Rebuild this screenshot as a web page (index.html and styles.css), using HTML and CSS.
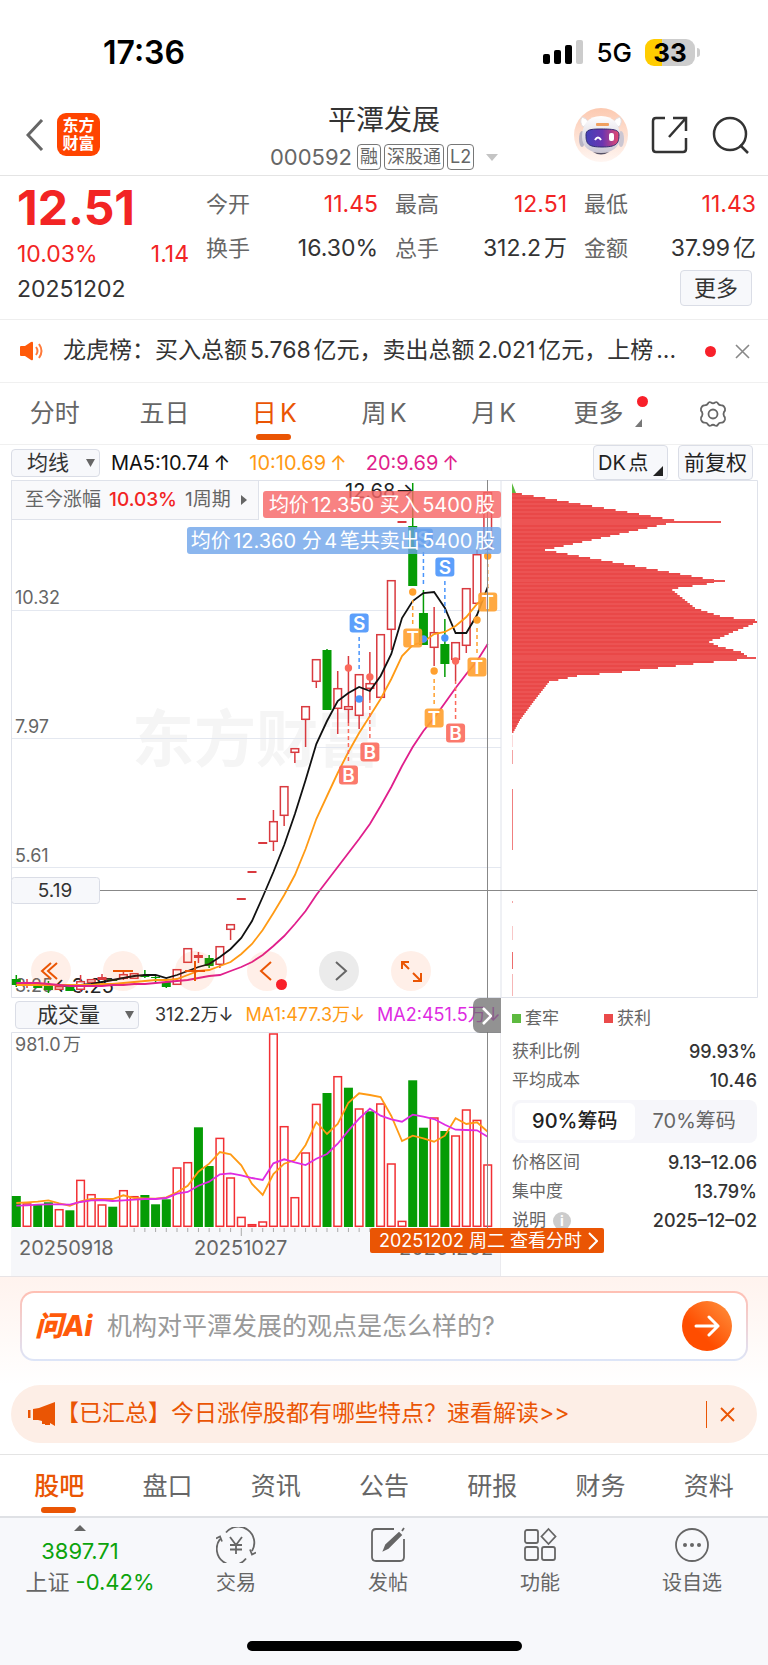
FILE: index.html
```html
<!DOCTYPE html>
<html lang="zh-CN">
<head>
<meta charset="utf-8">
<meta name="viewport" content="width=device-width, initial-scale=1">
<title>平潭发展 000592</title>
<link rel="stylesheet" href="styles.css">
</head>
<body>
<div class="status">
  <span class="clock">17:36</span>
  <span class="status-right">
    <svg class="signal" viewBox="0 0 40 26" aria-hidden="true"><rect x="0" y="15" width="7" height="10" rx="2"/><rect x="11" y="11" width="7" height="14" rx="2"/><rect x="22" y="6" width="7" height="19" rx="2"/><rect x="33" y="1" width="7" height="24" rx="2" fill="#ccc"/></svg>
    <span class="network">5G</span>
    <span class="battery">33</span>
  </span>
</div>

<header class="head">
  <div class="head-left">
    <button class="plain" aria-label="返回"><svg width="18" height="32" viewBox="0 0 18 32"><path d="M16 1 2 16l14 15" fill="none" stroke="#666" stroke-width="3"/></svg></button>
    <span class="brand">东方<br>财富</span>
  </div>
  <div class="head-mid">
    <h1>平潭发展</h1>
    <div class="code">000592 <span class="chip">融</span><span class="chip">深股通</span><span class="chip">L2</span><svg class="caret" width="12" height="7" viewBox="0 0 12 7"><path d="M0 0h12L6 7z" fill="#c4c4c4"/></svg></div>
  </div>
  <div class="head-right">
    <button class="plain" aria-label="智能助手"><svg width="54" height="56" viewBox="0 0 54 56">
      <defs>
        <linearGradient id="halo" x1="0" y1="0" x2="0" y2="1"><stop offset="0" stop-color="#fcc9b0"/><stop offset="1" stop-color="#fff6f2"/></linearGradient>
        <linearGradient id="visor" x1="0" y1="0" x2="1" y2="0"><stop offset="0" stop-color="#4340b8"/><stop offset=".5" stop-color="#6b35b0"/><stop offset="1" stop-color="#e8496e"/></linearGradient>
        <linearGradient id="shell" x1="0" y1="0" x2="0" y2="1"><stop offset="0" stop-color="#fff"/><stop offset="1" stop-color="#c9c5d3"/></linearGradient>
      </defs>
      <circle cx="27" cy="28" r="27" fill="url(#halo)"/>
      <path d="M9 20q-4-5-1-10 5 1 7 6zM45 20q4-5 1-10-5 1-7 6z" fill="#fff" stroke="#e3dbdc"/>
      <ellipse cx="8" cy="32" rx="3" ry="8" fill="#b9b5c4"/><ellipse cx="47" cy="32" rx="3" ry="8" fill="#cbc6d2"/>
      <path d="M27 9c13 0 19 9 19 21 0 10-8 16-19 16S8 40 8 30C8 18 14 9 27 9z" fill="url(#shell)"/>
      <path d="M27 22c14 0 18 1 18 6 0 9-3 12-17 12s-16-3-16-12c0-5 3-6 15-6z" fill="url(#visor)" stroke="#312b72"/>
      <path d="M21 33q3-5 6 0" fill="none" stroke="#fff" stroke-width="2"/>
      <rect x="35" y="26" width="5" height="8" rx="2" fill="#fff"/>
      <rect x="22" y="16" width="13" height="3" rx="1" fill="#f0a060"/>
      <path d="M19 45q8 5 16 0-8 2-16 0z" fill="#555064"/>
    </svg></button>
    <button class="plain" aria-label="分享"><svg width="38" height="38" viewBox="0 0 38 38" fill="none" stroke="#333" stroke-width="2.5"><path d="M14 2H5Q2 2 2 5v28q0 3 3 3h27q3 0 3-3V22M22 2h13v13M35 2 18 21"/></svg></button>
    <button class="plain" aria-label="搜索"><svg width="38" height="38" viewBox="0 0 38 38" fill="none" stroke="#333" stroke-width="2.5"><circle cx="18" cy="18" r="16"/><path d="m28 29 8 8"/></svg></button>
  </div>
</header>

<section class="quote">
  <div class="quote-top">
    <div class="price">
      <strong>12.51</strong>
      <div class="change"><span>10.03%</span><span>1.14</span></div>
    </div>
    <dl class="stats">
      <div><dt>今开</dt><dd class="up">11.45</dd></div>
      <div><dt>最高</dt><dd class="up">12.51</dd></div>
      <div><dt>最低</dt><dd class="up">11.43</dd></div>
      <div><dt>换手</dt><dd>16.30%</dd></div>
      <div><dt>总手</dt><dd>312.2万</dd></div>
      <div><dt>金额</dt><dd>37.99亿</dd></div>
    </dl>
  </div>
  <div class="quote-foot"><time>20251202</time><button class="more">更多</button></div>
</section>

<section class="notice">
  <svg width="24" height="20" viewBox="0 0 24 20"><path d="M1 5h4l6-4q2-1 2 1v16q0 2-2 1l-6-4H1q-1 0-1-1V6q0-1 1-1z" fill="#ff5a0a"/><path d="M16 6q3 4 0 8M19 3q5 7 0 14" fill="none" stroke="#ff7a3a" stroke-width="2"/></svg>
  <p>龙虎榜：买入总额5.768亿元，卖出总额2.021亿元，上榜...</p>
  <i class="dot"></i>
  <button class="plain" aria-label="关闭"><svg width="15" height="15" viewBox="0 0 15 15"><path d="m1 1 13 13M14 1 1 14" stroke="#888" stroke-width="1.6"/></svg></button>
</section>

<nav class="periods">
  <button>分时</button><button>五日</button><button class="on">日K</button><button>周K</button><button>月K</button>
  <button class="has-more">更多<i class="dot"></i><svg width="7" height="8" viewBox="0 0 7 8"><path d="M7 0v8H0z" fill="#777"/></svg></button>
  <button aria-label="设置"><svg width="30" height="28" viewBox="0 0 30 28" fill="none" stroke="#666" stroke-width="1.8" stroke-linejoin="round"><path d="M10 3.500Q11 1.500 13 2.500 15 4 17 2.500 19 1.500 20 3.500 21 5.500 24 5.300 26 5.500 27 8.500 27.500 10.500 26 12 25 14 26 16 27.500 17.500 27 19.500 26 22.500 24 22.700 21 22.500 20 24.500 19 26.500 17 25.500 15 24 13 25.500 11 26.500 10 24.500 9 22.500 6 22.700 4 22.500 3 19.500 2.500 17.500 4 16 5 14 4 12 2.500 10.500 3 8.500 4 5.500 6 5.300 9 5.500 10 3.500z"/><circle cx="15" cy="14" r="4.500"/></svg></button>
</nav>

<div class="ma-bar">
  <span class="picker"><select aria-label="均线"><option>均线</option></select><svg width="9" height="8" viewBox="0 0 9 8"><path d="M0 0h9L4.500 8z" fill="#666"/></svg></span>
  <span class="ma5">MA5:10.74<b>↑</b></span><span class="ma10">10:10.69<b>↑</b></span><span class="ma20">20:9.69<b>↑</b></span>
  <button class="box dk">DK点<svg width="10" height="10" viewBox="0 0 10 10"><path d="M10 0v10H0z" fill="#222"/></svg></button>
  <button class="box">前复权</button>
</div>

<section class="kline">
  <svg viewBox="0 480 768 518" role="img" aria-label="日K线与筹码分布">
    <text class="mark" x="132" y="762">东方财富</text>
    <g class="grid"><path d="M11 610.500H501M11 738.500H501M315 747.500H501M11 867.500H501"/></g>
    <path class="frame" d="M11.500 480.500V997.500H757.500V480.500zM501 480.500V997.500"/>
    <g class="axis"><text x="15" y="604">10.32</text><text x="15" y="733">7.97</text><text x="15" y="862">5.61</text><text x="15" y="992">3.25</text></g>
    <text class="tag-dark" x="53" y="993">←3.25</text>
    <g id="chips"></g>
    <g id="candles"></g>
    <g id="averages"></g>
    <text class="tag-dark" x="345" y="498">12.68→</text>
    <g id="markers"></g>
    <path class="cross" d="M100 890.500H757M487.500 480V998"/>
    <rect x="11.500" y="877.500" width="88" height="26" rx="3" fill="#f7f8fb" stroke="#dadde6"/>
    <text class="cross-label" x="55" y="897">5.19</text>
    <rect x="263" y="491" width="238" height="27" rx="3" fill="#f76767" opacity=".82"/>
    <rect x="187" y="527" width="314" height="27" rx="3" fill="#6ea4ea" opacity=".8"/>
    <text class="deal" x="495" y="512">均价12.350 买入5400股</text>
    <text class="deal" x="495" y="548">均价12.360 分4笔共卖出5400股</text>
  </svg>
  <button class="since">至今涨幅<b>10.03%</b>1周期<svg width="6" height="10" viewBox="0 0 6 10"><path d="M0 0l6 5-6 5z" fill="#666"/></svg></button>
  <div class="tools">
    <button aria-label="最早"><svg viewBox="0 0 40 40"><path d="m20 12-9 8 9 8M26 12l-9 8 9 8"/></svg></button>
    <button aria-label="缩小"><svg viewBox="0 0 40 40"><path d="M10 20h20"/></svg></button>
    <button aria-label="放大"><svg viewBox="0 0 40 40"><path d="M10 20h20M20 10v20"/></svg></button>
    <button aria-label="前一日"><svg viewBox="0 0 40 40"><path d="m24 11-10 9 10 9"/></svg><i class="dot"></i></button>
    <button class="gray" aria-label="后一日"><svg viewBox="0 0 40 40"><path d="m17 11 10 9-10 9"/></svg></button>
    <button aria-label="全屏"><svg viewBox="0 0 40 40"><path d="M11 18v-7h7M11 11l7 7M30 22v8h-8M30 30l-8-8"/></svg></button>
  </div>
</section>

<section class="lower">
  <div class="volume">
    <div class="vol-bar">
      <span class="picker wide"><select aria-label="成交量"><option>成交量</option></select><svg width="9" height="8" viewBox="0 0 9 8"><path d="M0 0h9L4.500 8z" fill="#666"/></svg></span>
      <span>312.2万↓</span><span class="v1">MA1:477.3万↓</span><span class="v2">MA2:451.5万↓</span>
      <button class="handle" aria-label="收起"><svg width="10" height="18" viewBox="0 0 10 18"><path d="m1 1 8 8-8 8" fill="none" stroke="#fff" stroke-width="2.500"/></svg></button>
    </div>
    <svg viewBox="0 1032 501 244" role="img" aria-label="成交量">
      <path class="frame" d="M11.500 1228V1032.500H501"/>
      <rect x="11" y="1228" width="490" height="49" fill="#f6f7fa"/>
      <path d="M500.500 1032v245" stroke="#ebebef"/>
      <text class="axis-text" x="15" y="1051">981.0万</text>
      <g id="volumes"></g>
      <g id="vol-averages"></g>
      <path class="cross" d="M487.500 1032V1228"/>
      <g class="date-text"><text x="19" y="1255">20250918</text><text x="194" y="1255">20251027</text><text x="399" y="1255">20251202</text></g>
    </svg>
    <button class="day-link">20251202 周二 查看分时<svg width="10" height="18" viewBox="0 0 10 18"><path d="m1 1 8 8-8 8" fill="none" stroke="#fff" stroke-width="2"/></svg></button>
  </div>
  <aside class="cost">
    <div class="legend"><span><i class="g"></i>套牢</span><span><i class="r"></i>获利</span></div>
    <dl><div><dt>获利比例</dt><dd>99.93%</dd></div><div><dt>平均成本</dt><dd>10.46</dd></div></dl>
    <div class="toggle"><button class="on">90%筹码</button><button>70%筹码</button></div>
    <dl><div><dt>价格区间</dt><dd>9.13–12.06</dd></div><div><dt>集中度</dt><dd>13.79%</dd></div><div><dt>说明<i class="info">i</i></dt><dd>2025–12–02</dd></div></dl>
  </aside>
</section>

<section class="ask-wrap">
  <form class="ask">
    <label class="ask-logo" for="ask">问Ai</label>
    <input id="ask" type="text" placeholder="机构对平潭发展的观点是怎么样的?">
    <button type="button" aria-label="提问"><svg width="26" height="22" viewBox="0 0 26 22" fill="none" stroke="#fff" stroke-width="3" stroke-linecap="round" stroke-linejoin="round"><path d="M2 11h22M15 2l9 9-9 9"/></svg></button>
  </form>
</section>

<div class="promo">
  <svg width="28" height="24" viewBox="0 0 28 24" fill="#ea5504"><path d="M0 8h2.500v8H0zM5 7l6-1L27 0v24l-5-3v2h-5v-1h-3v-3l-4-1H5z"/></svg>
  <a href="#">【已汇总】今日涨停股都有哪些特点？速看解读&gt;&gt;</a>
  <button class="plain" aria-label="关闭"><svg width="15" height="15" viewBox="0 0 15 15"><path d="m1 1 13 13M14 1 1 14" stroke="#ea5504" stroke-width="1.800"/></svg></button>
</div>

<nav class="sections">
  <a class="on" href="#">股吧</a><a href="#">盘口</a><a href="#">资讯</a><a href="#">公告</a><a href="#">研报</a><a href="#">财务</a><a href="#">资料</a>
</nav>

<footer class="dock">
  <div class="dock-row">
    <a class="index" href="#"><svg width="12" height="6" viewBox="0 0 12 6"><path d="M6 0l6 6H0z" fill="#666"/></svg><span class="down">3897.71</span><span>上证 <em class="down">-0.42%</em></span></a>
    <a href="#"><svg viewBox="0 0 40 36"><path d="M10 5.500A16 16 0 0 1 36 24M30 31.500A16 16 0 0 1 4 12M0 11.500l4-2 2 5M40 25.500l-4 2-2-5M14 10l6 8 6-8M20 18v9M14 18h12M14 22.500h12"/></svg>交易</a>
    <a href="#"><svg viewBox="0 0 40 36"><path d="M26 2H8Q4 2 4 6v24q0 4 4 4h24q4 0 4-4V12"/><path d="M34 4l2-3M16 23l2-5L31 6l2 2L20 21z" fill="#666"/></svg>发帖</a>
    <a href="#"><svg viewBox="0 0 40 36"><rect x="5" y="3" width="13" height="13" rx="2"/><rect x="5" y="20" width="13" height="13" rx="2"/><rect x="22" y="20" width="13" height="13" rx="2"/><path d="M28.500 2l7 7.500-7 7.500-7-7.500z"/></svg>功能</a>
    <a href="#"><svg viewBox="0 0 40 36"><circle cx="20" cy="18" r="16"/><g fill="#666" stroke="none"><circle cx="13" cy="18" r="2"/><circle cx="20" cy="18" r="2"/><circle cx="27" cy="18" r="2"/></g></svg>设自选</a>
  </div>
  <i class="home"></i>
</footer>
<script src="chart.js"></script>
</body>
</html>
```
FILE: styles.css
```css
* { box-sizing: border-box; margin: 0; padding: 0; }
body { background: #fff; color: #333; font-family: Inter, "Noto Sans CJK SC", sans-serif; font-size: 22px; line-height: 1.3; text-autospace: normal; }
button, select, input { font: inherit; color: inherit; border: 0; background: none; border-radius: 0; text-autospace: inherit; }
button { cursor: pointer; }
a { color: inherit; text-decoration: none; }
svg { display: block; }
i, em { font-style: normal; }
.plain { display: flex; }
.dot { width: 11px; height: 11px; border-radius: 50%; background: #f8202a; flex: none; }
.up { color: #f22424; }
.down { color: #0ca30c; }

.status { height: 88px; padding: 17px 73px 0 103px; display: flex; justify-content: space-between; align-items: center; color: #000; }
.clock { font-size: 32px; font-weight: 600; }
.status-right { display: flex; align-items: center; gap: 13px; }
.signal { width: 40px; height: 26px; }
.network { font-size: 26px; font-weight: 500; }
.battery { position: relative; width: 50px; height: 27px; border-radius: 9px; background: linear-gradient(90deg, #ffcc00 34%, #cdcdcd 34%); font-size: 26px; font-weight: 700; line-height: 27px; text-align: center; }
.battery::after { content: ""; position: absolute; left: 52px; top: 9px; width: 3px; height: 9px; border-radius: 0 3px 3px 0; background: #cdcdcd; }

.head { height: 88px; padding: 6px 18px 0 26px; display: grid; grid-template-columns: 1fr auto 1fr; align-items: center; border-bottom: 1px solid #e4e4e4; }
.head-left { display: flex; align-items: center; gap: 13px; }
.brand { width: 43px; height: 43px; border-radius: 9px; background: #ff4400; color: #fff; font-size: 16px; font-weight: 700; line-height: 18px; text-align: center; padding-top: 3px; }
.head-mid { text-align: center; padding: 7px 8px 0 0; }
h1 { font-size: 28px; font-weight: 400; line-height: 38px; }
.code { display: flex; align-items: center; gap: 3px; color: #666; font-size: 22px; line-height: 36px; }
.chip { border: 1px solid #777; border-radius: 4px; height: 26px; line-height: 24px; padding: 0 2px; font-size: 18px; }
.chip:first-of-type { margin-left: 2px; }
.caret { margin-left: 9px; }
.head-right { display: flex; justify-content: flex-end; align-items: center; gap: 23px; }

.quote { padding: 7px 12px 13px 17px; border-bottom: 1px solid #eee; }
.quote-top { display: flex; gap: 17px; }
.price { width: 172px; color: #f22424; }
.price strong { display: block; font-size: 48px; font-weight: 700; line-height: 50px; }
.change { display: flex; justify-content: space-between; line-height: 32px; padding-top: 5px; font-size: 23px; }
.stats { flex: 1; display: grid; grid-template-columns: repeat(3, 1fr); column-gap: 17px; }
.stats div { display: flex; justify-content: space-between; line-height: 43px; }
.stats dt { color: #666; }
.stats dd { font-size: 23px; }
.quote-foot { display: flex; justify-content: space-between; align-items: center; padding-right: 4px; }
.quote-foot time { font-size: 23px; padding-top: 4px; }
.more { width: 72px; height: 36px; border: 1px solid #dadde6; border-radius: 4px; background: #f7f8fb; }

.notice { height: 63px; padding: 0 18px 0 20px; display: flex; align-items: center; border-bottom: 1px solid #f0f0f0; }
.notice p { flex: 1; margin-left: 19px; white-space: nowrap; overflow: hidden; text-overflow: ellipsis; font-size: 23px; }
.notice .dot { margin-right: 19px; }

.periods { height: 62px; display: grid; grid-template-columns: repeat(7, 1fr); border-bottom: 1px solid #f0f0f0; font-size: 25px; color: #666; }
.periods button { position: relative; display: flex; justify-content: center; align-items: center; }
.on { position: relative; }
.periods .on, .sections .on { color: #ea5504; }
.periods .on::after, .sections .on::after { content: ""; position: absolute; left: 50%; bottom: 4px; width: 35px; height: 6px; margin-left: -18px; border-radius: 3px; background: #ea5504; }
.has-more { padding-right: 10px; }
.has-more .dot { position: absolute; right: 10px; top: 13px; }
.has-more svg { position: absolute; right: 16px; bottom: 17px; }

.ma-bar { height: 35px; padding: 0 15px 0 11px; display: flex; align-items: center; font-size: 20px; color: #111; }
.ma-bar b { font-weight: 400; margin-left: 4px; }
.picker { position: relative; flex: none; width: 89px; height: 28px; margin-right: 11px; }
.picker.wide { width: 124px; margin-right: 4px; }
.picker select { appearance: none; width: 100%; height: 100%; padding-left: 15px; border: 1px solid #dadde6; border-radius: 4px; background: #f7f8fb; font-size: 21px; line-height: 26px; color: #333; }
.picker.wide select { padding-left: 21px; }
.picker svg { position: absolute; right: 5px; top: 10px; }
.ma10 { color: #ff9a14; margin-left: 19px; }
.ma20 { color: #e01f8c; margin-left: 19px; }
.box { position: relative; width: 75px; height: 35px; border: 1px solid #dadde6; border-radius: 4px; background: #f7f8fb; font-size: 21px; color: #222; white-space: nowrap; }
.dk { margin: 0 10px 0 auto; text-align: left; padding-left: 4px; font-size: 20px; }
.dk svg { position: absolute; right: 4px; bottom: 3px; }

.kline { position: relative; }
.kline > svg, .volume > svg { width: 100%; height: auto; }
.frame { fill: none; stroke: #dfe2ea; }
.grid path { stroke: #e4e8f0; fill: none; stroke-width: 1; }
.mark { font-size: 62px; font-weight: 700; fill: #f5f5f5; }
.axis text, .axis-text { font-size: 18px; fill: #666; }
.tag-dark { font-size: 20px; fill: #222; }
.cross { fill: none; stroke: #888; }
.cross-label { font-size: 19px; fill: #333; text-anchor: middle; }
.deal { font-size: 20px; fill: #fff; text-anchor: end; }
.badge { font-size: 19px; font-weight: 600; fill: #fff; text-anchor: middle; }
.since { position: absolute; left: 11px; top: 0; height: 40px; padding: 0 11px 0 13px; border: 1px solid #dfe2ea; background: #f9f9fb; display: flex; align-items: center; font-size: 19px; color: #666; text-autospace: no-autospace; }
.since b { color: #f22424; font-weight: 500; margin: 0 8px; }
.since svg { margin-left: 10px; }
.tools { position: absolute; left: 31px; bottom: 7px; display: flex; gap: 32px; }
.tools button { position: relative; width: 40px; height: 40px; border-radius: 50%; background: rgba(255, 100, 30, .1); }
.tools path { fill: none; stroke: #ea5504; stroke-width: 2; }
.tools .gray { background: #ebebeb; }
.tools .gray path { stroke: #666; }
.tools .dot { position: absolute; right: 0; bottom: 1px; }

.lower { display: grid; grid-template-columns: 501fr 267fr; border-bottom: 1px solid #e8e4e6; }
.volume { position: relative; min-width: 0; }
.vol-bar { position: relative; height: 34px; padding-left: 15px; display: flex; align-items: center; gap: 12px; font-size: 18px; white-space: nowrap; text-autospace: no-autospace; }
.v1 { color: #ff9a14; }
.v2 { color: #de2be2; }
.handle { position: absolute; right: 0; top: 0; width: 28px; height: 35px; border-radius: 7px 0 0 7px; background: rgba(110, 110, 110, .75); display: flex; align-items: center; justify-content: center; }
.date-text text { font-size: 20px; fill: #666; }
.day-link { position: absolute; right: -103px; bottom: 23px; height: 25px; padding: 0 6px 0 9px; border-radius: 2px; background: #ea5504; color: #fff; display: flex; align-items: center; gap: 6px; font-size: 18px; white-space: nowrap; }
.cost { padding: 3px 11px 0; font-size: 17px; color: #666; }
.legend { display: flex; gap: 45px; line-height: 34px; margin-bottom: 2px; }
.legend span { display: flex; align-items: center; gap: 4px; }
.legend i { width: 9px; height: 9px; }
.g { background: #5dba3f; }
.r { background: #ea4a4a; }
.cost dl div { display: flex; justify-content: space-between; line-height: 29px; }
.cost dd { font-size: 18px; font-weight: 500; color: #333; }
.toggle { margin: 5px 0; padding: 3px; display: grid; grid-template-columns: 1fr 1fr; border-radius: 8px; background: #f6f6fa; font-size: 20px; line-height: 37px; text-autospace: no-autospace; }
.toggle .on { background: #fff; border-radius: 6px; color: #222; font-weight: 500; }
.info { display: inline-block; width: 18px; height: 18px; margin-left: 7px; border-radius: 50%; background: #ccc; color: #fff; font-weight: 700; font-size: 14px; line-height: 18px; text-align: center; }

.ask-wrap { padding: 14px 20px 24px; background: linear-gradient(#fff3ee, #fff); }
.ask { height: 70px; padding: 0 14px 0 13px; border: 2px solid transparent; border-radius: 14px; background: linear-gradient(#fff, #fff) padding-box, linear-gradient(#ffbfb3, #dde5f8) border-box; display: flex; align-items: center; }
.ask-logo { width: 58px; font-size: 28px; font-weight: 800; font-style: italic; color: #ff5a0a; white-space: nowrap; text-autospace: no-autospace; }
.ask input { flex: 1; min-width: 0; padding-left: 14px; font-size: 25px; outline: 0; text-autospace: no-autospace; }
.ask input::placeholder { color: #999; }
.ask button { width: 50px; height: 50px; border-radius: 50%; background: linear-gradient(45deg, #ff4d00 35%, #ff9440); display: flex; align-items: center; justify-content: center; }

.promo { height: 58px; margin: 0 11px 11px; padding: 0 22px 0 17px; border-radius: 29px; background: #fdeee6; color: #ea5504; display: flex; align-items: center; font-size: 23px; }
.promo a { flex: 1; white-space: nowrap; }
.promo .plain { height: 27px; align-items: center; padding-left: 13px; border-left: 1px solid #ea5504; }

.sections { height: 64px; padding: 0 5px; display: grid; grid-template-columns: repeat(7, 1fr); border-top: 1px solid #e4e4e4; border-bottom: 2px solid #dfe1e5; font-size: 25px; color: #666; text-align: center; line-height: 62px; }
.sections .on { font-weight: 500; }

.dock { background: #f7f8fb; color: #666; padding-bottom: 15px; }
.dock-row { display: grid; grid-template-columns: 160px repeat(4, 1fr); height: 123px; }
.dock a { display: flex; flex-direction: column; align-items: center; padding-top: 9px; font-size: 20px; line-height: 28px; }
.dock a:not(.index) > svg { width: 40px; height: 36px; margin-bottom: 6px; fill: none; stroke: #666; stroke-width: 1.8; }
.dock .index { font-size: 22px; line-height: 31px; padding: 7px 0 0 20px; }
.index svg { margin: 0 20px 5px 0; }
.index span:nth-of-type(1) { margin-right: 20px; }
.home { display: block; width: 275px; height: 10px; margin: 0 auto; border-radius: 5px; background: #000; }
```
FILE: chart.js
```js
const STEP = 10.714, X0 = 16.3, RED = '#d93a3f', GREEN = '#059c05';
const x = i => X0 + STEP * i;
const put = (id, html) => { document.getElementById(id).innerHTML = html; };
const line = (ys, color, map = y => y) =>
  `<polyline fill="none" stroke="${color}" stroke-width="1.8" points="${ys.map((y, i) => `${x(i).toFixed(1)},${map(y)}`).join(' ')}"/>`;

// direction, body top, body bottom, wick top, wick bottom
const candles = [
  ['g',979,985,975,987],['r',982,985,979,988],['g',983,988,982,988],['g',985,990,981,993],['r',986,990,985,990],
  ['g',984,991,984,991],['r',981,990,975,992],['r',979,983,979,983],['f',977,980,974,980],['g',979,981,979,981],
  ['r',974,979,970,980],['r',973,979,973,979],['g',975,977,970,978],['g',977,978,976,982],['g',982,987,981,988],
  ['r',969,985,969,985],['r',948,963,948,963],['f',955,958,952,963],['g',958,966,955,968],['r',946,965,946,968],
  ['r',924,930,924,940],['f',898,900,899,900],['f',871,873,872,872],['f',842,844,843,843],['r',821,842,810,851],
  ['r',786,816,786,826],['r',748,753,748,763],['r',706,720,706,747],['r',659,682,659,688],['g',650,710,649,710],
  ['r',688,709,671,734],['r',706,710,656,723],['r',674,716,674,729],['r',683,689,652,700],['r',634,698,634,698],
  ['r',580,630,580,650],['f',521,523,522,522],['g',526,586,483,586],['g',613,645,590,645],['r',632,648,607,666],
  ['g',644,664,619,677],['r',642,660,642,681],['r',588,646,588,653],['r',554,604,550,604],['r',492,550,492,550]
];
put('candles', candles.map(([d, t, b, wt, wb], i) => {
  const c = d === 'g' ? GREEN : RED, cx = x(i);
  return `<path stroke="${c}" stroke-width="1.5" d="M${cx} ${wt}V${t}M${cx} ${b}V${wb}"/>` + (d === 'r'
    ? `<rect x="${cx - 3.8}" y="${t + .7}" width="7.6" height="${b - t - 1.4}" fill="#fff" stroke="${c}" stroke-width="1.5"/>`
    : `<rect x="${cx - 4.5}" y="${t}" width="9" height="${b - t}" fill="${c}"/>`);
}).join(''));

const ma5 = [983,984,984,985,985,985,985,984,982,980,978,976,975,975,978,975,971,967,964,957,949,938,921,897,872,845,814,780,744,721,701,693,687,691,676,654,618,601,593,592,608,633,633,615,587];
const ma10 = [985,985,985,985,985,985,985,985,984,984,983,982,981,980,980,979,975,971,970,966,962,954,944,930,913,895,875,849,819,796,773,752,733,716,699,679,656,645,642,634,632,626,617,604,595];
const ma20 = [983,983,983,984,985,986,986,986,986,985,985,984,984,983,982,981,980,978,976,975,971,967,962,955,946,936,924,911,895,881,867,853,839,824,806,787,766,747,731,718,703,688,674,661,644];
put('averages', line(ma5, '#111') + line(ma10, '#ff9a14') + line(ma20, '#e01f8c'));

// letter, candle index, badge centre y, dot y
const marks = [['S',32,623,699],['S',38,538,639],['S',40,567,638],['B',31,775,668],['B',33,752,677],['B',41,733,661],
  ['T',37,638,592],['T',39,718,671],['T',43,667,620],['T',44,602,556]];
const tone = { S: '#4a95fb', B: '#fb6a5c', T: '#ffa02e' };
put('markers', marks.map(([k, i, y, dot]) => {
  const c = tone[k], cx = x(i), s = k === 'S' ? 1 : -1;
  const near = y + 14 * s, far = k === 'T' ? dot + 8 : k === 'S' ? Math.min(dot - 8, y + 48) : y - 52;
  return `<path d="M${cx} ${near}V${far}" stroke="${c}" stroke-width="1.5" stroke-dasharray="4 3"/><circle cx="${cx}" cy="${dot}" r="3.7" fill="${c}"/>` +
    `<rect x="${cx - 9.5}" y="${y - 9.5}" width="19" height="19" rx="3" fill="${c}" opacity=".9"/><text class="badge" x="${cx}" y="${y + 7}">${k}</text>`;
}).join(''));

// chip distribution outline: y, width from the left axis
const outline = [[493,4],[521,168],[550,33],[580,202],[583,202],[589,159],[608,183],[617,211],[620,243],[622,245],[625,239],[632,221],[639,206],[641,195],
  [646,206],[652,229],[656,235],[658,243],[660,225],[663,190],[667,155],[672,110],[676,65],[682,37],[701,22],[720,8],[733,1],[735,0]];
const widthAt = y => {
  const k = Math.max(1, outline.findIndex(p => p[0] >= y));
  const [y0, w0] = outline[k - 1], [y1, w1] = outline[k];
  return w0 + (w1 - w0) * (y - y0) / (y1 - y0);
};
let chips = '<path d="M512 483l4 10h-4z" fill="#5dba3f"/>';
for (let y = 493; y < 733; y += 2) chips += `<rect x="512" y="${y}" width="${widthAt(y + 1).toFixed(1)}" height="2" fill="${y % 4 === 1 ? '#e94848' : '#ec5353'}"/>`;
[[521,209],[580,213],[657,244]].forEach(([y, w]) => { chips += `<rect x="512" y="${y}" width="${w}" height="2" fill="#ec5353"/>`; });
[[735,747,.2],[750,764,.5],[789,850,.7],[901,903,.5],[926,940,.3],[952,969,.8],[974,996,.4]].forEach(([a, b, o]) => {
  chips += `<rect x="512" y="${a}" width="1" height="${b - a}" fill="#e94848" opacity="${o}"/>`;
});
put('chips', chips);

const vy = v => +(990 + v / 3).toFixed(1);
const vols = 'g618 r640 g644 g637 r657 g661 r569 r612 r643 g650 r600 r618 g615 g643 g628 r532 r516 g412 g528 r443 r562 r680 r702 r694 r130 r408 r621 r487 r341 g309 r258 g293 r355 g364 r340 r520 r692 g271 g413 r382 g423 r436 r358 r389 r523'.split(' ');
let bars = '';
vols.forEach((v, i) => {
  const t = vy(+v.slice(1)), cx = x(i), h = 1227 - t;
  bars += v[0] === 'g' ? `<rect x="${cx - 4.5}" y="${t}" width="9" height="${h}" fill="${GREEN}"/>`
    : `<rect x="${cx - 3.8}" y="${t + .7}" width="7.6" height="${Math.max(1, h - 1.4)}" fill="#fff" stroke="#f23034" stroke-width="1.5"/>`;
  if (i > 10) bars += `<path d="M${cx} 1228v${i === 21 ? 8 : 4}" stroke="#aaa"/>`;
});
put('volumes', bars);
const v1 = [639,637,635,631,640,647,634,627,627,627,616,624,625,626,622,607,587,545,521,486,493,526,582,615,552,521,510,465,396,432,402,338,310,315,321,378,453,437,445,455,437,385,402,397,425];
const v2 = [647,646,644,643,643,644,636,631,630,633,631,629,627,627,624,611,606,587,575,553,550,556,564,570,520,508,517,525,506,492,461,422,386,356,377,388,395,374,380,387,404,419,420,421,440];
put('vol-averages', line(v1, '#ff9a14', vy) + line(v2, '#de2be2', vy));
```
